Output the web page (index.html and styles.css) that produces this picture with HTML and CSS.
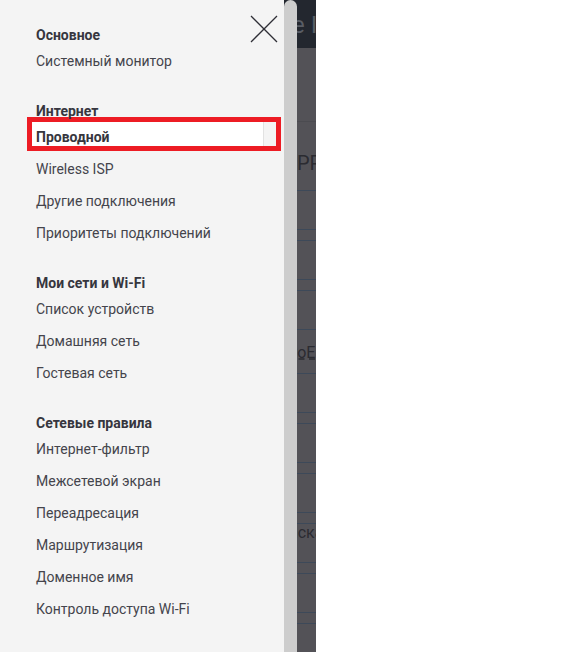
FILE: index.html
```html
<!DOCTYPE html>
<html lang="ru">
<head>
    <meta charset="UTF-8">
    <title>Меню</title>
    <link rel="stylesheet" href="styles.css">
</head>
<body>
<div class="screen">
    <!-- страница под затемнением -->
    <div class="page">
        <div class="page-head"><span class="head-title">Wire IPoE</span></div>
        <div class="page-top"></div>
        <div class="page-title"><span class="title-text">PPPoE</span></div>
        <div class="field"></div>
        <div class="spacer"></div>
        <div class="field"></div>
        <div class="spacer"></div>
        <div class="field"></div>
        <div class="field tall"><span class="link-text">PPPoE</span></div>
        <div class="field"></div>
        <div class="spacer"></div>
        <div class="field"></div>
        <div class="spacer"></div>
        <div class="field"></div>
        <div class="spacer"></div>
        <div class="field"><span class="label-text">Маска подсети</span></div>
        <div class="spacer"></div>
        <div class="field"></div>
        <div class="spacer"></div>
        <div class="field"></div>
    </div>

    <aside class="drawer">
        <nav class="menu">
            <div class="group">
                <div class="group-title">Основное</div>
                <a class="item">Системный монитор</a>
            </div>
            <div class="group">
                <div class="group-title">Интернет</div>
                <a class="item active">Проводной</a>
                <a class="item">Wireless ISP</a>
                <a class="item">Другие подключения</a>
                <a class="item">Приоритеты подключений</a>
            </div>
            <div class="group">
                <div class="group-title">Мои сети и Wi-Fi</div>
                <a class="item">Список устройств</a>
                <a class="item">Домашняя сеть</a>
                <a class="item">Гостевая сеть</a>
            </div>
            <div class="group">
                <div class="group-title">Сетевые правила</div>
                <a class="item">Интернет-фильтр</a>
                <a class="item">Межсетевой экран</a>
                <a class="item">Переадресация</a>
                <a class="item">Маршрутизация</a>
                <a class="item">Доменное имя</a>
                <a class="item">Контроль доступа Wi-Fi</a>
            </div>
        </nav>
        <div class="scrollbar"></div>
        <button class="close" aria-label="Закрыть">
            <svg width="28" height="28" viewBox="0 0 28 28">
                <path d="M1 1 L27 27 M27 1 L1 27" stroke="#2e2e36" stroke-width="1.3" fill="none"/>
            </svg>
        </button>
    </aside>
</div>
</body>
</html>
```

FILE: styles.css
```css
* {
    margin: 0;
    padding: 0;
    box-sizing: border-box;
}
html, body {
    background: #ffffff;
    font-family: Roboto, "Liberation Sans", sans-serif;
}

.screen {
    position: relative;
    width: 316px;
    height: 652px;
    overflow: hidden;
}

/* затемнённая страница */
.page {
    height: 100%;
    background: #535257;
    color: #2b2b31;
    white-space: nowrap;
}
.page-head {
    height: 48px;
    background: #23272f;
    padding-left: 257px;
    line-height: 50px;
}
.head-title {
    font-size: 24px;
    color: #595d65;
}
.page-top {
    height: 74px;
    border-bottom: 1px solid #4b4b50;
}
.page-title {
    height: 69px;
    border-bottom: 1px solid #3d4959;
    padding: 31px 0 0 297px;
    font-size: 20px;
    line-height: 20px;
}
.field {
    height: 39px;
    border-bottom: 1px solid #3d4959;
}
.field.tall {
    height: 44px;
    padding: 14px 0 0 267px;
    font-size: 16px;
    line-height: 18px;
}
.spacer {
    height: 11px;
    border-bottom: 1px solid #3d4959;
}
.link-text {
    text-decoration: underline dashed;
}
.label-text {
    display: block;
    padding-left: 275px;
    font-size: 16px;
    line-height: 18px;
}

/* меню */
.drawer {
    position: absolute;
    top: 0;
    left: 0;
    bottom: 0;
    display: flex;
}
.menu {
    width: 284px;
    background: #f4f4f4;
    padding-top: 25px;
}
.group + .group {
    margin-top: 24px;
}
.group-title {
    padding-left: 36px;
    font-size: 14px;
    line-height: 20px;
    font-weight: 700;
    color: #36363e;
}
.item {
    display: block;
    height: 32px;
    padding-left: 36px;
    font-size: 14px;
    line-height: 32px;
    color: #44444c;
    cursor: pointer;
}
.item.active {
    height: 34px;
    margin: -4px 3px 2px 27px;
    padding: 6px 0 0 4px;
    line-height: 18px;
    font-weight: 700;
    color: #36363e;
    border: 5px solid #ed1c24;
    background: linear-gradient(to right, #ffffff 231px, #e2e2e2 231px, #e2e2e2 232px, #f4f4f4 232px);
}
.scrollbar {
    width: 13px;
    background: #cdcdcd;
    border-radius: 7px 7px 0 0;
}
.close {
    position: absolute;
    left: 250px;
    top: 15px;
    width: 28px;
    height: 28px;
    border: none;
    background: none;
    cursor: pointer;
}
.close svg {
    display: block;
}
```
